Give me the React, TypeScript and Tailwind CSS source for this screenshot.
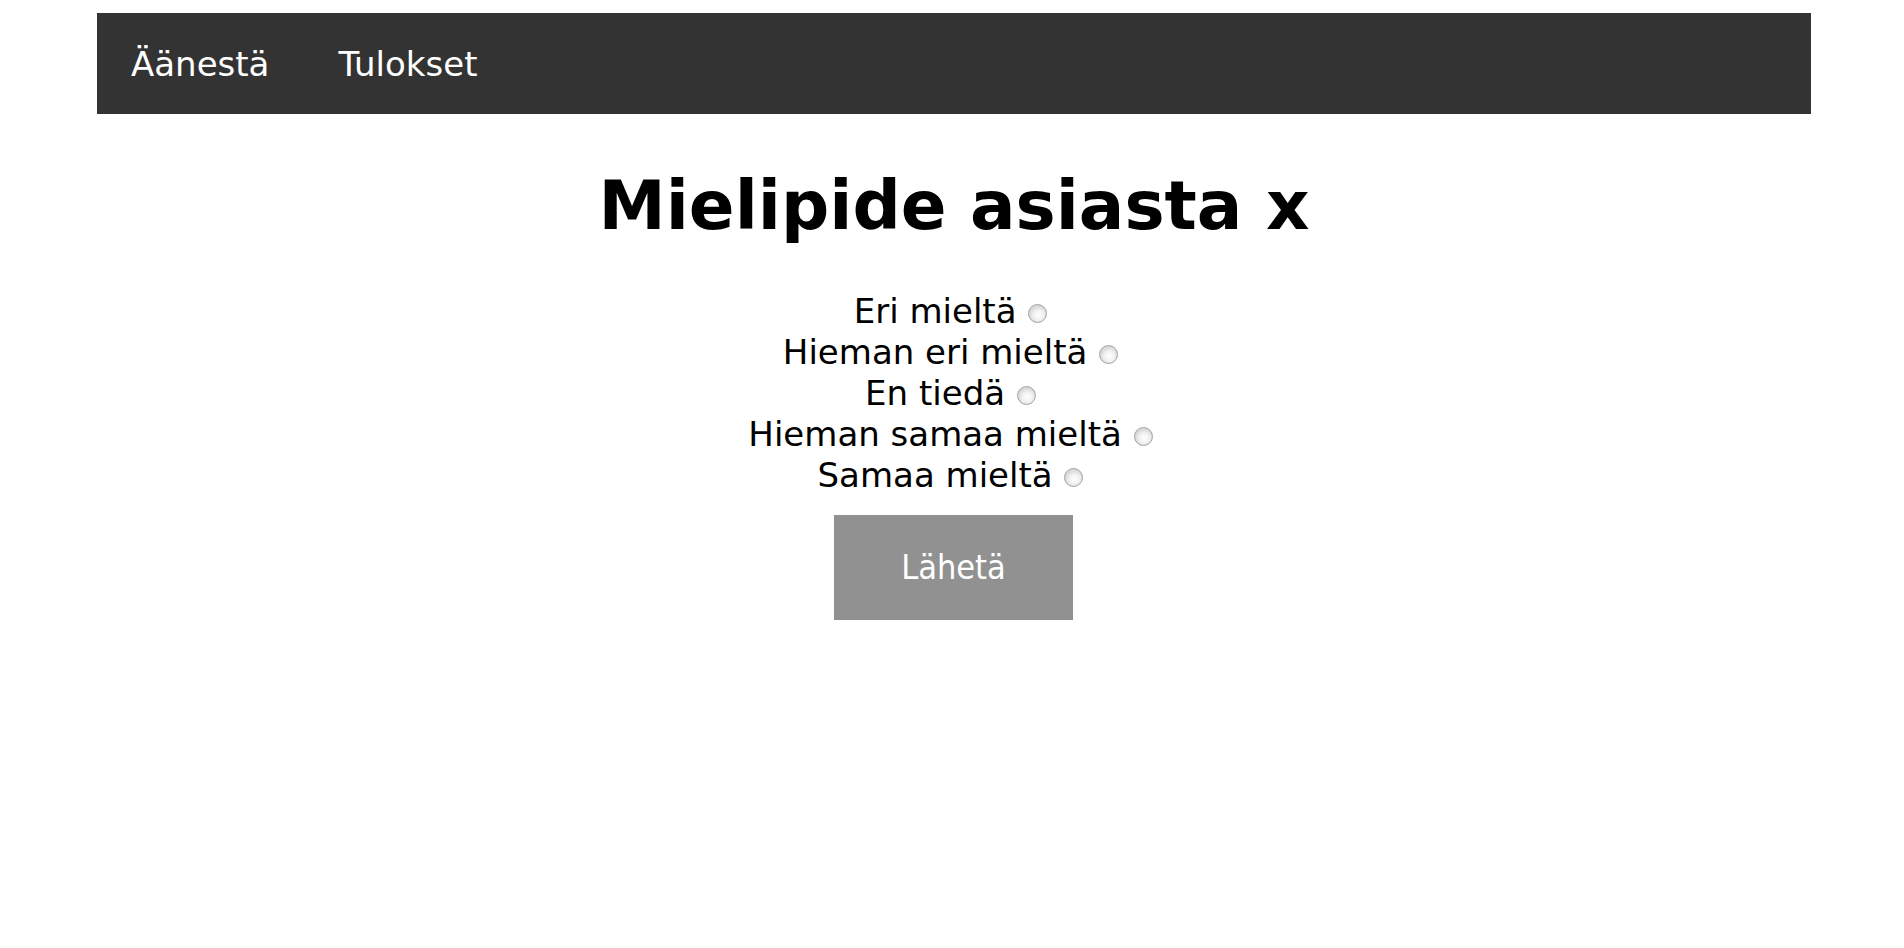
import React from "react";

const options = [
  "Eri mieltä",
  "Hieman eri mieltä",
  "En tiedä",
  "Hieman samaa mieltä",
  "Samaa mieltä",
];

export default function App() {
  return (
    <div className="min-h-[948px] bg-white font-['DejaVu_Sans',Verdana,sans-serif] text-black">
      <div className="pt-[13px]">
        <nav className="ml-[97px] flex h-[101px] w-[1714px] items-center gap-[69px] bg-[#333333] pl-[34px] text-[34px] text-white">
          <a href="#" className="leading-[40px]">Äänestä</a>
          <a href="#" className="leading-[40px]">Tulokset</a>
        </nav>
      </div>
      <h1 className="ml-[4px] mt-[52px] text-center text-[67.5px] font-bold leading-[80px]">
        Mielipide asiasta x
      </h1>
      <form className="mt-[45px] flex flex-col items-center">
        <div className="text-center text-[34px] leading-[41px]">
          {options.map((o) => (
            <div key={o}>
              {o}{" "}
              <input
                type="radio"
                name="mielipide"
                className="ml-[1px] mr-[3px] inline-block h-[19px] w-[19px] appearance-none rounded-full border border-[#a3a3a3] bg-[radial-gradient(circle_at_55%_60%,#ffffff_0%,#f2f2f2_35%,#d4d4d4_70%,#f3f3f3_78%,#ececec_100%)] align-baseline"
              />
            </div>
          ))}
        </div>
        <button
          type="button"
          className="ml-[3px] mt-[19px] h-[105px] w-[239px] bg-[#919191] font-['DejaVu_Sans_Condensed','Liberation_Sans',sans-serif] text-[34px] text-white"
        >
          Lähetä
        </button>
      </form>
    </div>
  );
}
